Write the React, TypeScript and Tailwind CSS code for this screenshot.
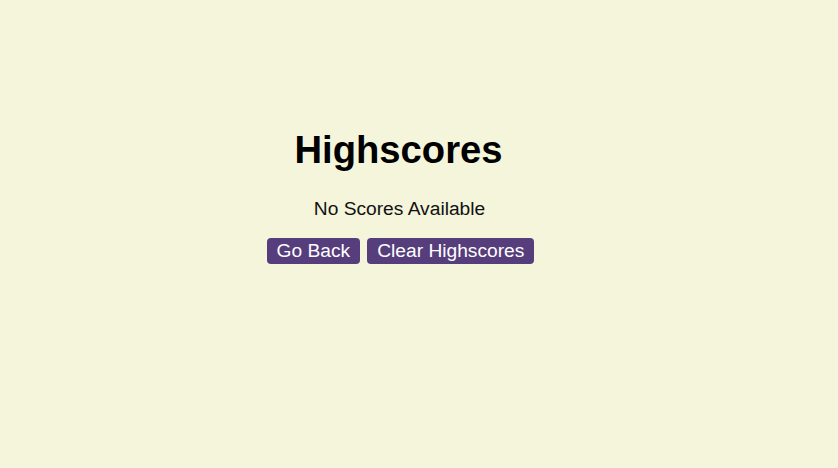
export default function App() {
  return (
    <div className="min-h-[468px] w-full bg-[#f5f5dc] flex flex-col items-center pr-[37px] pt-[128px]" style={{ fontFamily: '"Liberation Sans", Arial, sans-serif' }}>
      <h1 className="mr-[4px] text-[38.2px] leading-[44px] font-bold text-black">Highscores</h1>
      <p className="mr-[2px] mt-[26px] text-[19.2px] leading-[22px] text-[#111]">No Scores Available</p>
      <div className="mt-[18px] flex gap-[7px]">
        <button className="bg-[#563d7c] text-white text-[19.2px] leading-[22px] px-[10px] py-[2px] rounded-[4px]">Go Back</button>
        <button className="bg-[#563d7c] text-white text-[19.2px] leading-[22px] px-[10px] py-[2px] rounded-[4px]">Clear Highscores</button>
      </div>
    </div>
  );
}
